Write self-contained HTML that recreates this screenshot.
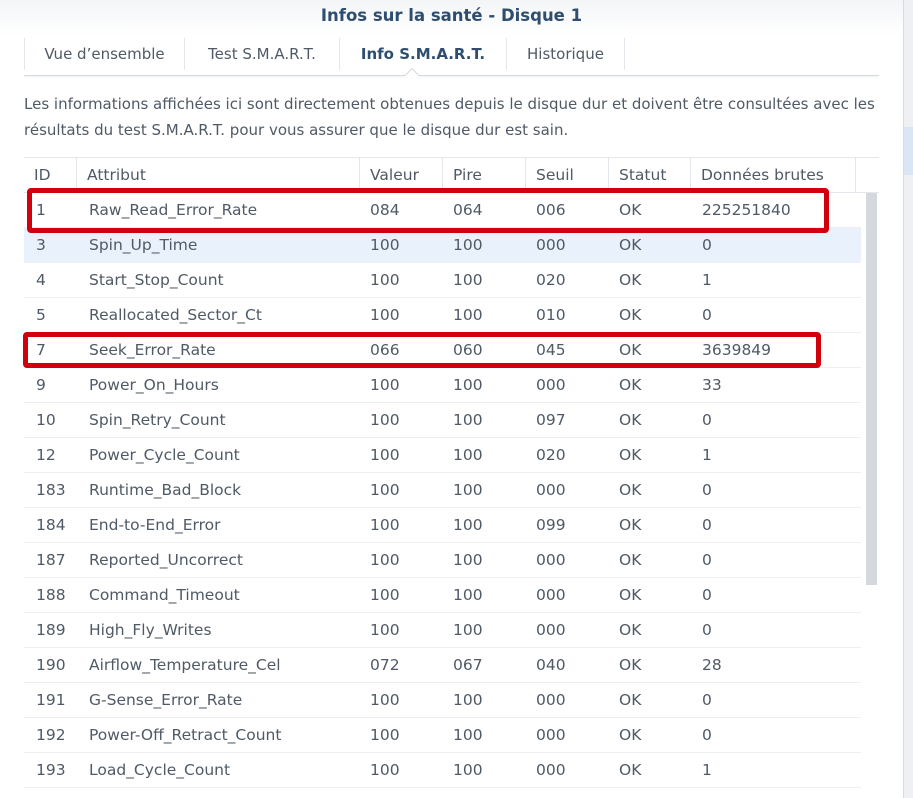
<!DOCTYPE html>
<html><head><meta charset="utf-8"><style>
*{margin:0;padding:0;box-sizing:border-box}
body{width:913px;height:798px;overflow:hidden;background:#fff;font-family:"DejaVu Sans","Liberation Sans",sans-serif;color:#4f5a66;position:relative}
.bg{position:absolute;left:903px;top:0;width:10px;height:798px;background:#eef0f3;border-left:1px solid #d8dbe0}
.bg .hl{position:absolute;left:0;top:127px;width:10px;height:48px;background:#dbe6f4}
.dlg{position:absolute;left:0;top:0;width:903px;height:798px;background:#fff}
.head{position:absolute;left:0;top:0;width:903px;height:36px;background:linear-gradient(#f3f5f7,#fff)}
.title{position:absolute;top:6px;left:0;width:903px;text-align:center;font-size:16.5px;font-weight:bold;color:#2e4d6f}
.tabs{position:absolute;top:38px;left:24px;height:32px}
.tab{position:absolute;top:0;font-size:15px;color:#4f5a66;text-align:center;line-height:32px;border-right:1px solid #e3e6ea;height:32px}
.tab.act{font-weight:bold;color:#2e4d6f}
.uline{position:absolute;top:75px;left:24px;width:855px;height:1px;background:#d5d9de;box-shadow:0 1px 2px #e5e8eb}
.notch{position:absolute;top:70px;left:407px;width:10px;height:10px;background:#fff;border-left:1px solid #d5d9de;border-top:1px solid #d5d9de;transform:rotate(45deg)}
.desc{position:absolute;top:91px;left:24px;width:878px;font-size:15px;line-height:26px;color:#4f5a66;white-space:nowrap}
.tbl{position:absolute;top:157px;left:24px}
.hdr{position:absolute;top:0;left:0;width:855px;height:36px;border-top:1px solid #e3e6ea;border-bottom:1px solid #e3e6ea}
.hdr div{position:absolute;top:0;height:35px;line-height:34px;font-size:15.5px;padding-left:10px;border-right:1px solid #e3e6ea;white-space:nowrap}
.row{position:absolute;left:0;width:837px;height:35px;border-bottom:1px solid #eceef0;font-size:15.5px;line-height:35px}
.row span{position:absolute;top:0;white-space:nowrap}
.row.hov{background:#e9f2fc}
.sb{position:absolute;left:866px;top:193px;width:11px;height:392px;background:#d5d8dc}
.box{position:absolute;border:5px solid #d0000c;border-radius:4px}
</style></head><body>
<div class="bg"><div class="hl"></div></div>
<div class="dlg">
<div class="head"></div>
<div class="title">Infos sur la santé - Disque 1</div>
<div class="tabs">
<div class="tab" style="left:0;width:161px;border-left:1px solid #e3e6ea">Vue d’ensemble</div>
<div class="tab" style="left:161px;width:155px">Test S.M.A.R.T.</div>
<div class="tab act" style="left:316px;width:167px">Info S.M.A.R.T.</div>
<div class="tab" style="left:483px;width:118px">Historique</div>
</div>
<div class="uline"></div><div class="notch"></div>
<div class="desc">Les informations affichées ici sont directement obtenues depuis le disque dur et doivent être consultées avec les<br>résultats du test S.M.A.R.T. pour vous assurer que le disque dur est sain.</div>
<div class="tbl">
<div class="hdr">
<div style="left:0;width:53px">ID</div>
<div style="left:53px;width:283px">Attribut</div>
<div style="left:336px;width:83px">Valeur</div>
<div style="left:419px;width:83px">Pire</div>
<div style="left:502px;width:83px">Seuil</div>
<div style="left:585px;width:82px">Statut</div>
<div style="left:667px;width:165px">Données brutes</div>
</div>
</div>
<div id="rows" class="tbl"></div>
<div class="sb"></div>
<div class="box" style="left:27px;top:188px;width:802px;height:45px"></div>
<div class="box" style="left:23px;top:332px;width:798px;height:36px"></div>
</div>
<script>
var d=[["1","Raw_Read_Error_Rate","084","064","006","225251840"],["3","Spin_Up_Time","100","100","000","0"],["4","Start_Stop_Count","100","100","020","1"],["5","Reallocated_Sector_Ct","100","100","010","0"],["7","Seek_Error_Rate","066","060","045","3639849"],["9","Power_On_Hours","100","100","000","33"],["10","Spin_Retry_Count","100","100","097","0"],["12","Power_Cycle_Count","100","100","020","1"],["183","Runtime_Bad_Block","100","100","000","0"],["184","End-to-End_Error","100","100","099","0"],["187","Reported_Uncorrect","100","100","000","0"],["188","Command_Timeout","100","100","000","0"],["189","High_Fly_Writes","100","100","000","0"],["190","Airflow_Temperature_Cel","072","067","040","28"],["191","G-Sense_Error_Rate","100","100","000","0"],["192","Power-Off_Retract_Count","100","100","000","0"],["193","Load_Cycle_Count","100","100","000","1"]];
var xs=[12,65,346,429,512,595,678],h="";
d.forEach(function(r,i){h+='<div class="row'+(i==1?' hov':'')+'" style="top:'+(36+35*i)+'px">';
var v=[r[0],r[1],r[2],r[3],r[4],"OK",r[5]];v.forEach(function(t,j){h+='<span style="left:'+xs[j]+'px">'+t+'</span>'});h+='</div>'});
document.getElementById('rows').innerHTML=h;
</script>
</body></html>
